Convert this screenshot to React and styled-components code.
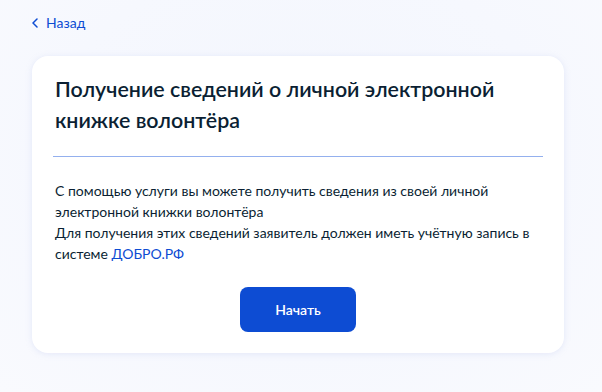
import React from 'react';
import styled, { createGlobalStyle } from 'styled-components';

const Global = createGlobalStyle`
  html, body {
    margin: 0;
    padding: 0;
    background: #f5f7fe;
  }
  body {
    font-family: Lato, "Noto Sans", sans-serif;
    color: #0b1f33;
  }
`

const Page = styled.div`
  width: 602px;
  height: 392px;
  box-sizing: border-box;
  padding: 12px 38px 0 32px;
  background: radial-gradient(ellipse at 50% 40%, #f3f6fd 0%, #f6f8fe 60%, #f9fafe 100%);
`

const Back = styled.a`
  display: inline-flex;
  align-items: center;
  gap: 8px;
  height: 20px;
  font-size: 14px;
  line-height: 20px;
  color: #0d4cd3;
  text-decoration: none;
  cursor: pointer;
  svg {
    width: 6px;
    height: 10px;
  }
`

const Card = styled.div`
  margin-top: 23px;
  box-sizing: border-box;
  width: 532px;
  padding: 18px 23px 21px;
  background: #ffffff;
  border-radius: 16px;
  box-shadow: 0 1px 6px rgba(170, 185, 230, 0.25);
`

const Title = styled.h1`
  margin: 0;
  font-size: 21.4px;
  line-height: 31px;
  font-weight: 600;
  color: #0b1f33;
`

const Divider = styled.div`
  margin: 20px -2px 23px;
  height: 0;
  border-top: 1px solid #94b0ee;
`

const Text = styled.p`
  margin: 0;
  font-size: 14px;
  line-height: 21px;
  color: #0b1f33;
`

const Link = styled.a`
  color: #0d4cd3;
  text-decoration: none;
`

const Actions = styled.div`
  display: flex;
  justify-content: center;
  margin-top: 23px;
`

const Button = styled.button`
  width: 116px;
  height: 45px;
  border: none;
  border-radius: 8px;
  background: #0d4cd3;
  color: #ffffff;
  font-family: Lato, "Noto Sans", sans-serif;
  font-size: 14px;
  font-weight: 600;
  cursor: pointer;
`

export default function App() {
  return (
    <Page>
      <Global />
      <Back>
        <svg viewBox="0 0 6 10" fill="none">
          <path d="M5 1L1 5l4 4" stroke="#0d4cd3" strokeWidth="1.5" strokeLinecap="round" strokeLinejoin="round" />
        </svg>
        Назад
      </Back>
      <Card>
        <Title>Получение сведений о личной электронной книжке волонтёра</Title>
        <Divider />
        <Text>
          С помощью услуги вы можете получить сведения из своей личной электронной книжки волонтёра
          <br />
          Для получения этих сведений заявитель должен иметь учётную запись в системе <Link>ДОБРО.РФ</Link>
        </Text>
        <Actions>
          <Button>Начать</Button>
        </Actions>
      </Card>
    </Page>
  );
}
